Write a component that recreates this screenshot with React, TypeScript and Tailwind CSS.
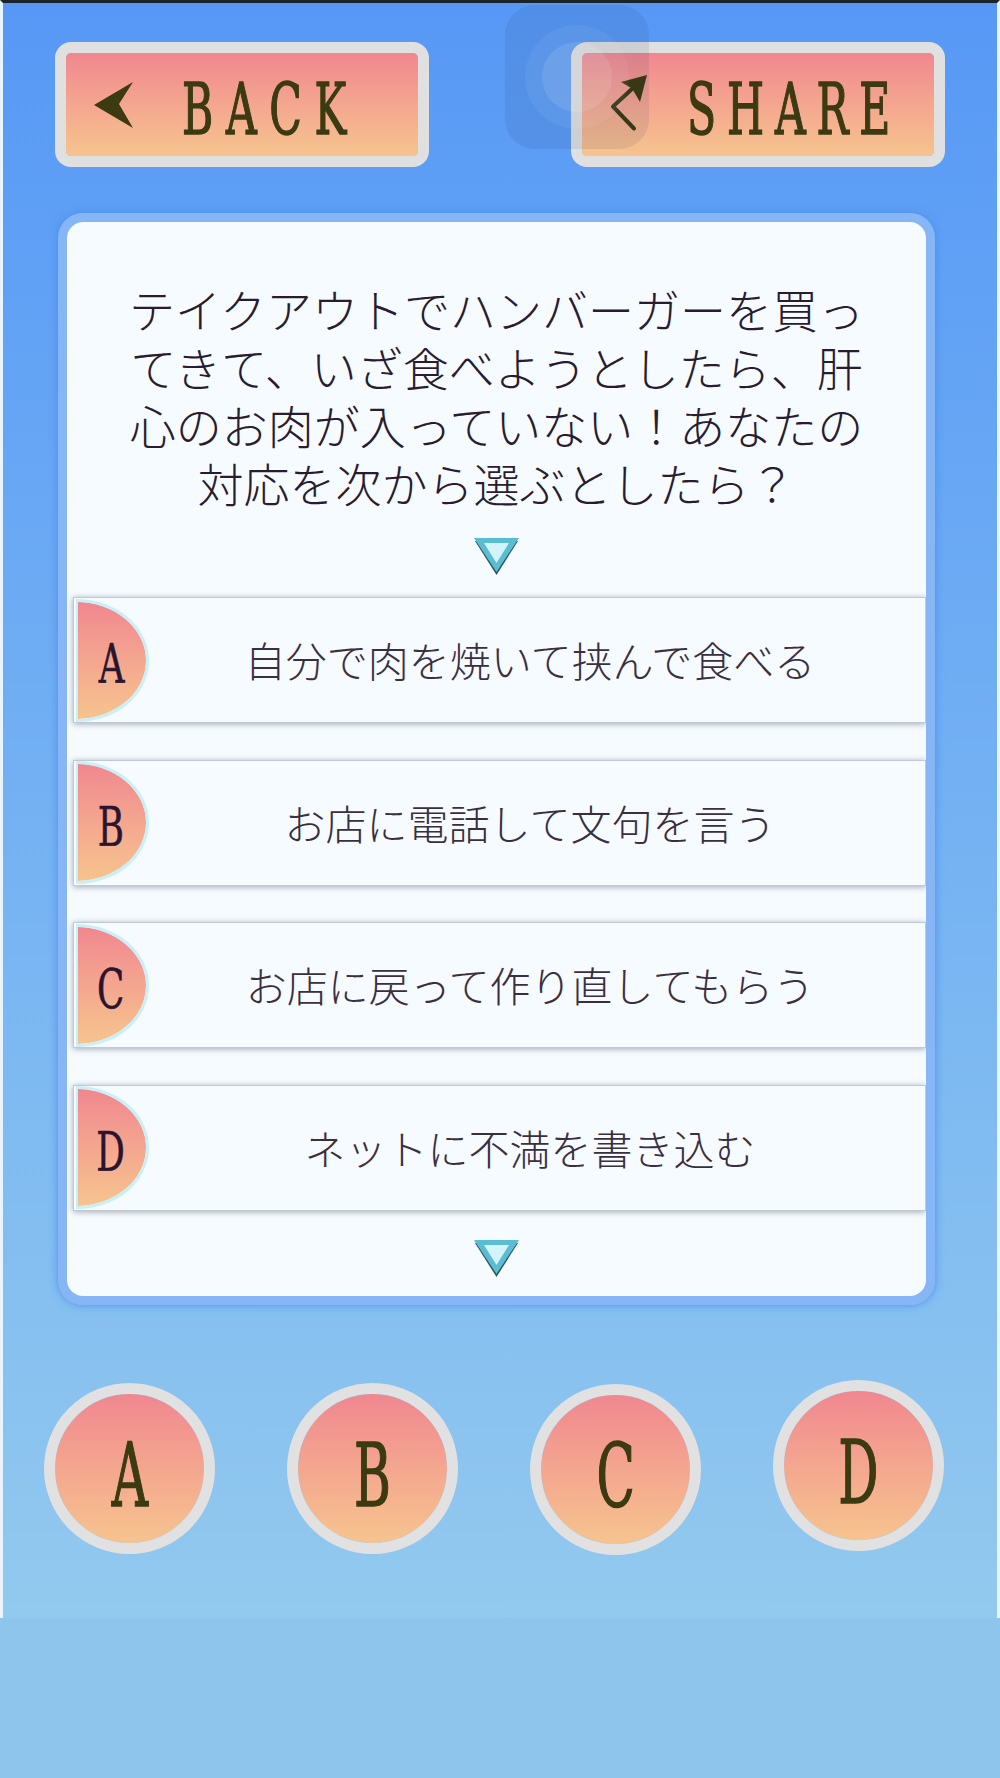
import type { ReactNode } from "react"

const serif = "font-['DejaVu_Serif','Liberation_Serif',serif]"
const jp = "font-['Noto_Sans_CJK_JP','Noto_Sans',sans-serif] font-light"

const options = [
  { key: "A", text: "自分で肉を焼いて挟んで食べる" },
  { key: "B", text: "お店に電話して文句を言う" },
  { key: "C", text: "お店に戻って作り直してもらう" },
  { key: "D", text: "ネットに不満を書き込む" },
]

function BackArrow() {
  return (
    <svg width="39" height="46" viewBox="0 0 39 46" className="shrink-0">
      <path d="M0 23 L39 0 L25 22 L39 46 Z" fill="#3b3a10" />
    </svg>
  )
}

function ShareArrow() {
  return (
    <svg width="40" height="62" viewBox="0 0 40 62" className="shrink-0">
      <path d="M24 54.5 L3 32.5 L23 14" fill="none" stroke="#3b3a10" strokeWidth="4" strokeLinecap="round" strokeLinejoin="round" />
      <path d="M37 1 L11 8 L22 14.5 L30 28 Z" fill="#3b3a10" />
    </svg>
  )
}

function Triangle() {
  return (
    <svg width="45" height="37" viewBox="0 0 45 37" className="block">
      <path d="M1 3 L44 3 L22.5 37 Z" fill="#2d5561" />
      <path d="M0 0 L45 0 L22.5 34 Z" fill="#5bbdd2" />
      <path d="M10 5 L35 5 L22.5 25 Z" fill="#d2f3f9" />
    </svg>
  )
}

function TopButton({ icon, label, gap }: { icon: ReactNode; label: string; gap: string }) {
  return (
    <div className="w-[374px] h-[125px] rounded-[16px] border-[11px] border-[#e0e0e0] bg-clip-padding bg-linear-to-b from-[#f0878f] to-[#f6c48e] flex items-center pl-[28px] overflow-hidden">
      {icon}
      <span className={`${gap} ${serif} translate-y-[5px] inline-block origin-left scale-x-[0.6] whitespace-nowrap text-[71px] leading-none text-[#3b3a10] [-webkit-text-stroke:1.5px_#3b3a10]`}>
        {label}
      </span>
    </div>
  )
}

export default function App() {
  return (
    <div className="relative w-[1000px] h-[1778px] bg-[#8ec5ed] overflow-hidden">
      <div className="h-[1618px] border-t-[3px] border-t-[#1b2427] border-x-[3px] border-x-[#eaf4fd] bg-linear-to-b from-[#5798f6] to-[#92c9ee]">
        {/* top buttons */}
        <div className="flex justify-between px-[52px] pt-[39px]">
          <TopButton icon={<BackArrow />} label="BACK" gap="ml-[49px] tracking-[21px]" />
          <TopButton icon={<ShareArrow />} label="SHARE" gap="ml-[37px] tracking-[18px]" />
        </div>

        {/* question card */}
        <div className="ml-[55px] mt-[46px] w-[877px] rounded-[25px] border-[9px] border-[#86b6f6] shadow-[0_0_8px_rgba(70,140,235,0.9)]">
          <div className="rounded-[16px] bg-[#f6fbff] overflow-hidden pt-[57px] pb-[19px]">
            <p className={`${jp} text-center text-[46px] leading-[58px] text-[#2a1c30]`}>
              <span className="block">テイクアウトでハンバーガーを買っ</span>
              <span className="block">てきて、いざ食べようとしたら、肝</span>
              <span className="block">心のお肉が入っていない！あなたの</span>
              <span className="block">対応を次から選ぶとしたら？</span>
            </p>
            <div className="flex justify-center mt-[27px]">
              <Triangle />
            </div>

            <div className="mt-[22px] ml-[6px] flex flex-col gap-[36.5px]">
              {options.map((o) => (
                <div
                  key={o.key}
                  className="h-[126px] flex items-center pl-[2px] bg-[#f6fbff] border border-[#c3c9d2] shadow-[0_1px_6px_rgba(60,70,90,0.45)]"
                >
                  <div className="h-[123px] w-[73px] shrink-0 border-[3px] border-l-[2px] border-[#c9effa] rounded-r-[73px_62px] bg-clip-padding bg-linear-to-b from-[#f0878f] to-[#f6c48e] flex items-center justify-center pr-[2px]">
                    <span className={`${serif} inline-block scale-x-[0.66] translate-y-[5px] text-[54px] leading-none text-[#2a1530] [-webkit-text-stroke:0.6px_#2a1530]`}>
                      {o.key}
                    </span>
                  </div>
                  <div className={`${jp} flex-1 text-center pr-[14px] text-[41px] text-[#3a2f41]`}>{o.text}</div>
                </div>
              ))}
            </div>

            <div className="flex justify-center mt-[29.5px]">
              <Triangle />
            </div>
          </div>
        </div>

        {/* answer buttons */}
        <div className="flex items-start pl-[41px] gap-[72px] mt-[78px]">
          {options.map((o, i) => (
            <div
              key={o.key}
              className={`${i === 2 ? "mt-[1px]" : i === 3 ? "-mt-[3px]" : ""} w-[171px] h-[171px] rounded-full border-[11px] border-[#e1e1e1] bg-clip-padding bg-linear-to-b from-[#f0878f] to-[#f6c48e] flex items-center justify-center`}
            >
              <span className={`${serif} inline-block scale-x-[0.57] translate-y-[7px] text-[88px] leading-none text-[#3b3a10] [-webkit-text-stroke:1.5px_#3b3a10]`}>
                {o.key}
              </span>
            </div>
          ))}
        </div>
      </div>

      {/* floating assistive touch button */}
      <div className="absolute left-[505px] top-[5px] w-[144px] h-[144px] rounded-[30px] bg-[rgba(20,40,90,0.09)] flex items-center justify-center">
        <div className="w-[104px] h-[104px] rounded-full bg-white/[0.05] flex items-center justify-center">
          <div className="w-[70px] h-[70px] rounded-full bg-white/10" />
        </div>
      </div>
    </div>
  )
}
